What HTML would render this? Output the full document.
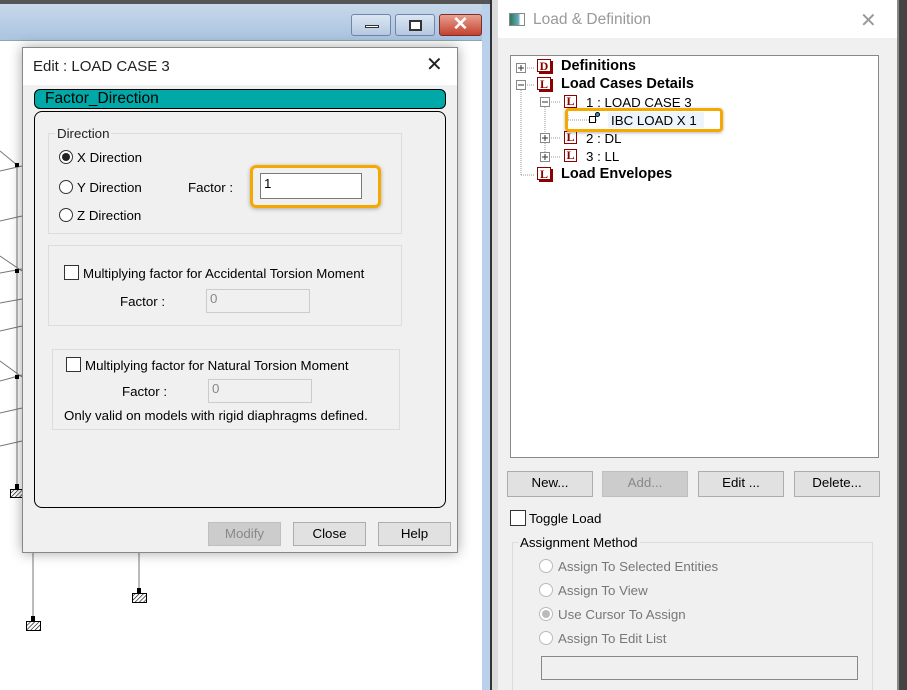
<!DOCTYPE html>
<html><head><meta charset="utf-8"><style>
*{box-sizing:border-box;margin:0;padding:0}
body{width:907px;height:690px;overflow:hidden;position:relative;background:#fff;font-family:"Liberation Sans",sans-serif;font-size:13.3px;color:#000}
.abs{position:absolute}
.btn{position:absolute;background:#e1e1e1;border:1px solid #adadad;text-align:center;line-height:22px;font-size:13.3px}
.grp{position:absolute;border:1px solid #dcdcdc}
.radio{position:absolute;width:14px;height:14px;border:1px solid #333;border-radius:50%;background:#fff}
.chk{position:absolute;width:15px;height:15px;border:1px solid #333;background:#fff}
.inp{position:absolute;border:1px solid #7a7a7a;background:#fff;padding-left:3px;font-size:13.3px}
.dis{border-color:#ccc;background:#f0f0f0;color:#888}
.x{font-family:"DejaVu Sans",sans-serif;font-weight:200}
</style></head><body>
<div class="abs" style="left:0;top:0;width:492px;height:4px;background:#555"></div>
<div class="abs" style="left:0;top:4px;width:482px;height:37px;background:linear-gradient(#c8d8ea,#a9c3e0)"></div>
<div class="abs" style="left:0;top:40px;width:482px;height:1px;background:#8aa"></div>
<div class="abs" style="left:482px;top:4px;width:8px;height:686px;background:#b9d1ea"></div>
<div class="abs" style="left:490px;top:0;width:2px;height:690px;background:#333"></div>
<div class="abs" style="left:492px;top:0;width:6px;height:690px;background:#dcdcdc"></div>
<div class="abs" style="left:351px;top:14px;width:40px;height:22px;border:1px solid #6f86a6;border-radius:3px;background:linear-gradient(#dbe6f3,#b6c9e1)"><div class="abs" style="left:13px;top:10px;width:14px;height:3px;background:#fff;border:1px solid #333"></div></div>
<div class="abs" style="left:395px;top:14px;width:40px;height:22px;border:1px solid #6f86a6;border-radius:3px;background:linear-gradient(#dbe6f3,#b6c9e1)"><div class="abs" style="left:13px;top:5px;width:13px;height:11px;border:2px solid #333;background:#fff"></div></div>
<div class="abs" style="left:439px;top:14px;width:43px;height:22px;border:1px solid #7a3028;border-radius:3px;background:linear-gradient(#e8a08f,#c4412f);color:#fff;font-weight:bold;font-size:19px;text-align:center;line-height:20px">✕</div>
<svg class="abs" style="left:0;top:41px" width="482" height="649">
<defs><pattern id="h" width="3" height="3" patternUnits="userSpaceOnUse" patternTransform="rotate(45)"><rect width="3" height="3" fill="#fff"/><line x1="0" y1="0" x2="0" y2="3" stroke="#000" stroke-width="1.2"/></pattern></defs>
<g stroke="#777" stroke-width="1" fill="none">
<line x1="17" y1="124" x2="17" y2="450"/>
<line x1="0" y1="110" x2="17" y2="124"/><line x1="0" y1="130" x2="22" y2="125"/>
<line x1="0" y1="180" x2="22" y2="175"/><line x1="0" y1="215" x2="22" y2="230"/><line x1="0" y1="232" x2="22" y2="228"/>
<line x1="0" y1="262" x2="22" y2="258"/><line x1="0" y1="290" x2="22" y2="285"/>
<line x1="0" y1="320" x2="22" y2="336"/><line x1="0" y1="340" x2="22" y2="334"/>
<line x1="0" y1="372" x2="22" y2="367"/><line x1="0" y1="405" x2="22" y2="400"/>
<line x1="33" y1="510" x2="33" y2="578"/><line x1="139" y1="510" x2="139" y2="550"/>
</g>
<g fill="#000"><rect x="15" y="122" width="4" height="4"/><rect x="15" y="228" width="4" height="4"/><rect x="15" y="334" width="4" height="4"/>
<rect x="15" y="443" width="4" height="6"/><rect x="31" y="575" width="4" height="6"/><rect x="137" y="547" width="4" height="6"/></g>
<g fill="url(#h)" stroke="#000"><rect x="10.5" y="448.5" width="12" height="8"/><rect x="26.5" y="580.5" width="14" height="9"/><rect x="132.5" y="552.5" width="14" height="9"/></g>
</svg>
<div class="abs" style="left:22px;top:47px;width:436px;height:506px;background:#f0f0f0;border:1px solid #888;box-shadow:0 0 12px rgba(0,0,0,.35)"></div>
<div class="abs" style="left:23px;top:48px;width:434px;height:37px;background:#fff"></div>
<div class="abs" style="left:33px;top:58px;font-size:15px;color:#222">Edit : LOAD CASE 3</div>
<div class="abs x" style="left:426px;top:52px;font-size:20px;color:#222">✕</div>
<div class="abs" style="left:34px;top:89px;width:412px;height:20px;background:#00a8a8;border:1px solid #000;border-radius:6px;font-size:15.5px;line-height:18px;padding-left:10px">Factor_Direction</div>
<div class="abs" style="left:34px;top:111px;width:412px;height:397px;border:1px solid #000;border-radius:8px"></div>
<div class="grp" style="left:48px;top:133px;width:354px;height:101px"></div>
<div class="abs" style="left:55px;top:126px;background:#f0f0f0;padding:0 2px;color:#222">Direction</div>
<div class="radio" style="left:59px;top:150px"><div class="abs" style="left:2px;top:2px;width:8px;height:8px;border-radius:50%;background:#222"></div></div>
<div class="abs" style="left:77px;top:150px">X Direction</div>
<div class="radio" style="left:59px;top:180px"></div><div class="abs" style="left:77px;top:180px">Y Direction</div>
<div class="radio" style="left:59px;top:208px"></div><div class="abs" style="left:77px;top:208px">Z Direction</div>
<div class="abs" style="left:188px;top:180px">Factor :</div>
<div class="abs" style="left:250px;top:165px;width:131px;height:43px;border:3px solid #f5a800;border-radius:6px;box-shadow:0 1px 4px rgba(0,0,0,.3)"></div>
<div class="inp" style="left:260px;top:173px;width:102px;height:26px;line-height:20px">1</div>
<div class="grp" style="left:48px;top:245px;width:354px;height:81px"></div>
<div class="chk" style="left:64px;top:265px"></div>
<div class="abs" style="left:83px;top:266px">Multiplying factor for Accidental Torsion Moment</div>
<div class="abs" style="left:120px;top:294px">Factor :</div>
<div class="inp dis" style="left:206px;top:289px;width:104px;height:24px;line-height:18px">0</div>
<div class="grp" style="left:52px;top:349px;width:348px;height:81px"></div>
<div class="chk" style="left:66px;top:357px"></div>
<div class="abs" style="left:85px;top:358px">Multiplying factor for Natural Torsion Moment</div>
<div class="abs" style="left:122px;top:384px">Factor :</div>
<div class="inp dis" style="left:208px;top:379px;width:104px;height:24px;line-height:18px">0</div>
<div class="abs" style="left:64px;top:408px">Only valid on models with rigid diaphragms defined.</div>
<div class="btn" style="left:208px;top:522px;width:73px;height:24px;background:#ccc;border-color:#bfbfbf;color:#888">Modify</div>
<div class="btn" style="left:293px;top:522px;width:73px;height:24px">Close</div>
<div class="btn" style="left:378px;top:522px;width:73px;height:24px">Help</div>
<div class="abs" style="left:498px;top:0;width:400px;height:690px;background:#f0f0f0"></div>
<div class="abs" style="left:498px;top:0;width:400px;height:38px;background:#fff"></div>
<div class="abs" style="left:897px;top:0;width:2px;height:690px;background:#888"></div>
<div class="abs" style="left:899px;top:0;width:8px;height:690px;background:#444"></div>
<div class="abs" style="left:509px;top:13px;width:16px;height:13px;border:1px solid #888;background:linear-gradient(90deg,#2a7a5a,#6ab 60%,#fff 75%)"></div>
<div class="abs" style="left:533px;top:11px;font-size:15.5px;color:#999">Load &amp; Definition</div>
<div class="abs x" style="left:860px;top:8px;font-size:20px;color:#999">✕</div>
<div class="abs" style="left:510px;top:55px;width:369px;height:403px;background:#fff;border:1px solid #888"></div>
<svg class="abs" style="left:510px;top:55px" width="369" height="140">
<g stroke="#999" stroke-dasharray="1 1" fill="none">
<line x1="11" y1="13" x2="25" y2="13"/><line x1="11" y1="30" x2="25" y2="30"/><line x1="11" y1="35" x2="11" y2="120"/><line x1="11" y1="120" x2="25" y2="120"/>
<line x1="35" y1="47" x2="50" y2="47"/><line x1="35" y1="52" x2="35" y2="102"/><line x1="35" y1="83" x2="50" y2="83"/><line x1="35" y1="102" x2="50" y2="102"/>
<line x1="58" y1="60" x2="58" y2="65"/><line x1="58" y1="65" x2="88" y2="65"/>
</g>
<g fill="#fff" stroke="#888"><rect x="6.5" y="8.5" width="9" height="9"/><rect x="6.5" y="25.5" width="9" height="9"/><rect x="30.5" y="42.5" width="9" height="9"/><rect x="30.5" y="78.5" width="9" height="9"/><rect x="30.5" y="97.5" width="9" height="9"/></g>
<g stroke="#333"><line x1="8" y1="13" x2="14" y2="13"/><line x1="11" y1="10" x2="11" y2="16"/><line x1="8" y1="30" x2="14" y2="30"/><line x1="32" y1="47" x2="38" y2="47"/><line x1="32" y1="83" x2="38" y2="83"/><line x1="35" y1="80" x2="35" y2="86"/><line x1="32" y1="102" x2="38" y2="102"/><line x1="35" y1="99" x2="35" y2="105"/></g>
</svg>
<div class="abs" style="left:537px;top:59px;width:14px;height:13px;background:#fff;border:1px solid #8b0000;box-shadow:2px 2px 0 #8b0000;color:#8b0000;font:bold 12px 'Liberation Serif',serif;text-align:center;line-height:12px">D</div>
<div class="abs" style="left:537px;top:77px;width:14px;height:13px;background:#fff;border:1px solid #8b0000;box-shadow:2px 2px 0 #8b0000;color:#8b0000;font:bold 12px 'Liberation Serif',serif;text-align:center;line-height:12px">L</div>
<div class="abs" style="left:537px;top:167px;width:14px;height:13px;background:#fff;border:1px solid #8b0000;box-shadow:2px 2px 0 #8b0000;color:#8b0000;font:bold 12px 'Liberation Serif',serif;text-align:center;line-height:12px">L</div>
<div class="abs" style="left:561px;top:58px;font-weight:bold;font-size:14.5px">Definitions</div>
<div class="abs" style="left:561px;top:76px;font-weight:bold;font-size:14.5px">Load Cases Details</div>
<div class="abs" style="left:561px;top:166px;font-weight:bold;font-size:14.5px">Load Envelopes</div>
<div class="abs" style="left:564px;top:95px;width:13px;height:13px;border:1px solid #8b0000;color:#8b0000;font:bold 12px 'Liberation Serif',serif;text-align:center;line-height:11px">L</div>
<div class="abs" style="left:564px;top:131px;width:13px;height:13px;border:1px solid #8b0000;color:#8b0000;font:bold 12px 'Liberation Serif',serif;text-align:center;line-height:11px">L</div>
<div class="abs" style="left:564px;top:149px;width:13px;height:13px;border:1px solid #8b0000;color:#8b0000;font:bold 12px 'Liberation Serif',serif;text-align:center;line-height:11px">L</div>
<div class="abs" style="left:586px;top:95px">1 : LOAD CASE 3</div>
<div class="abs" style="left:586px;top:131px">2 : DL</div>
<div class="abs" style="left:586px;top:149px">3 : LL</div>
<div class="abs" style="left:565px;top:108px;width:158px;height:24px;border:3px solid #f5a800;border-radius:4px;box-shadow:0 1px 3px rgba(0,0,0,.3)"></div>
<div class="abs" style="left:608px;top:112px;width:96px;height:16px;background:#eef4fb"></div>
<div class="abs" style="left:589px;top:116px;width:7px;height:7px;border:1px solid #000;background:#fff"></div>
<div class="abs" style="left:595px;top:112px;width:5px;height:5px;border-radius:50%;background:#2a9fd6;border:1px solid #000"></div>
<div class="abs" style="left:611px;top:113px">IBC LOAD X 1</div>
<div class="btn" style="left:507px;top:471px;width:86px;height:26px">New...</div>
<div class="btn" style="left:602px;top:471px;width:86px;height:26px;background:#ccc;border-color:#bfbfbf;color:#888">Add...</div>
<div class="btn" style="left:698px;top:471px;width:86px;height:26px">Edit ...</div>
<div class="btn" style="left:794px;top:471px;width:86px;height:26px">Delete...</div>
<div class="chk" style="left:510px;top:510px;width:16px;height:16px"></div>
<div class="abs" style="left:529px;top:511px">Toggle Load</div>
<div class="abs" style="left:512px;top:542px;width:361px;height:148px;border:1px solid #dcdcdc;border-bottom:none"></div>
<div class="abs" style="left:518px;top:535px;background:#f0f0f0;padding:0 2px">Assignment Method</div>
<div class="radio" style="left:539px;top:559px;border-color:#bbb"></div><div class="abs" style="left:558px;top:559px;color:#777">Assign To Selected Entities</div>
<div class="radio" style="left:539px;top:583px;border-color:#bbb"></div><div class="abs" style="left:558px;top:583px;color:#777">Assign To View</div>
<div class="radio" style="left:539px;top:607px;border-color:#bbb"><div class="abs" style="left:2px;top:2px;width:8px;height:8px;border-radius:50%;background:#bbb"></div></div><div class="abs" style="left:558px;top:607px;color:#777">Use Cursor To Assign</div>
<div class="radio" style="left:539px;top:631px;border-color:#bbb"></div><div class="abs" style="left:558px;top:631px;color:#777">Assign To Edit List</div>
<div class="abs" style="left:541px;top:656px;width:317px;height:24px;border:1px solid #888;background:#f0f0f0"></div>
</body></html>
